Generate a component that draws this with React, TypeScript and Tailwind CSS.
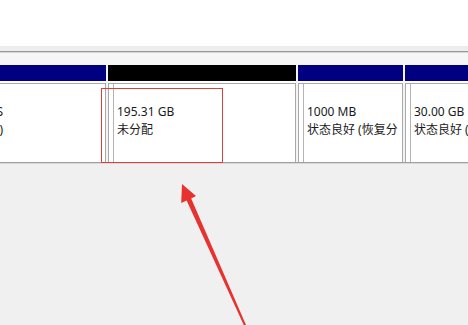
const font = "font-['Noto_Sans','Noto_Sans_CJK_SC',sans-serif]";

type Col = {
  w: string;
  bar: string;
  lines: string[];
  align?: "left" | "right";
};

const cols: Col[] = [
  { w: "w-[206px] -ml-[100px]", bar: "bg-[#000080]", lines: ["119.24 GB NTFS", "状态良好 (启动, 主分区)"], align: "right" },
  { w: "w-[188px]", bar: "bg-black", lines: ["195.31 GB", "未分配"] },
  { w: "w-[105px]", bar: "bg-[#000080]", lines: ["1000 MB", "状态良好 (恢复分"] },
  { w: "w-[120px]", bar: "bg-[#000080]", lines: ["30.00 GB", "状态良好 (恢复分区)"] },
];

function Column({ col }: { col: Col }) {
  return (
    <div className={`flex flex-col shrink-0 ${col.w}`}>
      <div className={`h-[16px] ${col.bar}`} />
      <div className="h-[2px] bg-white" />
      <div className="flex-1 flex bg-white border-t border-x border-[#a9a9a9] pl-[4px]">
        <div
          className={`flex-1 flex border-l border-[#b4b4b4] overflow-hidden whitespace-nowrap pt-[19px] leading-[18px] ${
            col.align === "right" ? "justify-end pr-[102px]" : "pl-[3px]"
          }`}
        >
          <div className={col.align === "right" ? "text-right" : ""}>
            {col.lines.map((l) => (
              <div key={l}>{l}</div>
            ))}
          </div>
        </div>
      </div>
    </div>
  );
}

export default function App() {
  return (
    <div className={`relative w-[468px] h-[325px] overflow-hidden bg-[#f0f0f0] text-[12px] text-[#1a1a1a] ${font}`}>
      <div className="h-[46px] bg-white" />
      <div className="h-[5px] bg-[#ededed]" />
      <div className="h-px bg-[#9a9a9a]" />
      <div className="h-px bg-[#d6d6d6]" />
      <div className="h-[12px] bg-[#f6f6f6]" />
      <div className="flex h-[97px] gap-[2px] bg-[#f4f4f4]">
        {cols.map((c, i) => (
          <Column key={i} col={c} />
        ))}
      </div>
      <div className="h-px bg-[#a0a0a0]" />
      <div className="h-px bg-[#d8d8d8]" />

      {/* red highlight box */}
      <div className="absolute left-[101px] top-[88px] w-[122px] h-[75px] border border-[#d9403c]" />

      {/* red arrow */}
      <svg className="absolute left-0 top-0" width="468" height="325" viewBox="0 0 468 325">
        <polygon
          fill="#e6332f"
          points="182,184 196,196 191.2,198.5 246,325 244,325.6 186.6,200.5 181.2,203"
        />
      </svg>
    </div>
  );
}
